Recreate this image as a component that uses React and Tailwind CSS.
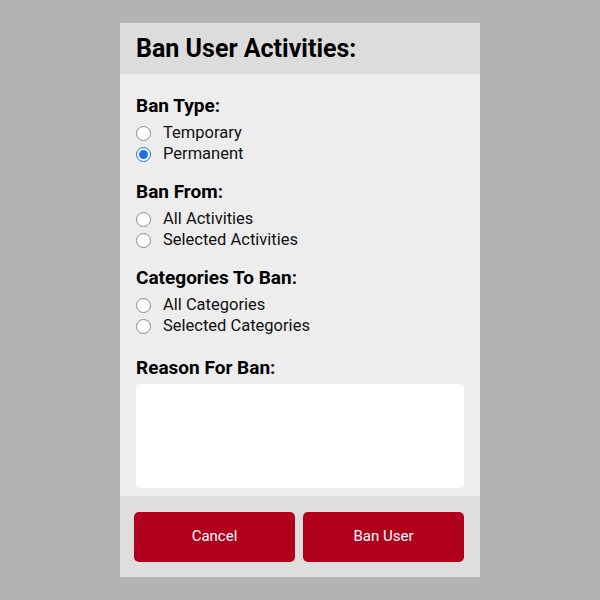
import React, { useState } from "react";

const Radio = ({ label, checked, onClick }) => (
  <label onClick={onClick} className="flex items-center h-[21px] cursor-pointer">
    <span
      className={
        checked
          ? "w-[15px] h-[15px] rounded-full border border-[#1a73e8] bg-white flex items-center justify-center"
          : "w-[15px] h-[15px] rounded-full border border-[#8a8a8a] bg-white"
      }
    >
      {checked && <span className="w-[9px] h-[9px] rounded-full bg-[#1a73e8]" />}
    </span>
    <span className="ml-[12px] text-[16.5px] text-[#111]">{label}</span>
  </label>
);

const Section = ({ title, options, value, onChange, className }) => (
  <div className={className}>
    <div className="text-[19px] font-bold leading-[24px] text-black mb-[5px]">{title}</div>
    {options.map((o) => (
      <Radio key={o} label={o} checked={value === o} onClick={() => onChange(o)} />
    ))}
  </div>
);

export default function App() {
  const [banType, setBanType] = useState("Permanent");
  const [banFrom, setBanFrom] = useState("");
  const [cats, setCats] = useState("");

  return (
    <div
      className="w-[600px] h-[600px] bg-[#b3b3b3] flex justify-center pt-[23px]"
      style={{ fontFamily: "Roboto, 'Liberation Sans', sans-serif" }}
    >
      <div className="w-[360px] h-[554px] flex flex-col">
        {/* Header */}
        <div className="h-[51px] bg-[#dcdcdc] px-4 flex items-center">
          <h1 className="text-[25px] font-bold text-black">Ban User Activities:</h1>
        </div>

        {/* Body */}
        <div className="flex-1 bg-[#ededed] px-4 pt-[20px] pb-2 flex flex-col">
          <Section
            title="Ban Type:"
            options={["Temporary", "Permanent"]}
            value={banType}
            onChange={setBanType}
          />
          <Section
            className="mt-[15px]"
            title="Ban From:"
            options={["All Activities", "Selected Activities"]}
            value={banFrom}
            onChange={setBanFrom}
          />
          <Section
            className="mt-[15px]"
            title="Categories To Ban:"
            options={["All Categories", "Selected Categories"]}
            value={cats}
            onChange={setCats}
          />
          <div className="mt-[19px] text-[19px] font-bold leading-[24px] text-black">
            Reason For Ban:
          </div>
          <textarea className="mt-[4px] flex-1 w-full bg-white rounded-[4px] outline-none p-2 text-[14px] resize-none" />
        </div>

        {/* Footer */}
        <div className="h-[81px] bg-[#dedede] pl-[14px] pr-[16px] flex items-center gap-[8px]">
          <button className="flex-1 h-[50px] rounded-[5px] bg-[#b0001e] text-white text-[15px]">
            Cancel
          </button>
          <button className="flex-1 h-[50px] rounded-[5px] bg-[#b0001e] text-white text-[15px]">
            Ban User
          </button>
        </div>
      </div>
    </div>
  );
}
